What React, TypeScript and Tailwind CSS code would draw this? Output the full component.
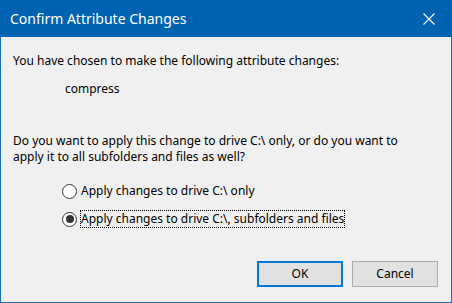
import React from 'react';

const RadioRow: React.FC<{ label: string; checked?: boolean; focused?: boolean }> = ({
  label,
  checked,
  focused,
}) => (
  <div className="flex h-[18px] items-center">
    <span className="flex h-[15px] w-[15px] shrink-0 items-center justify-center rounded-full border border-[#333333] bg-white">
      {checked && <span className="h-[8px] w-[8px] rounded-full bg-[#333333]" />}
    </span>
    <span
      className={`ml-[3px] flex h-[18px] items-center px-px ${
        focused ? 'outline outline-1 outline-dotted outline-[#000000] -outline-offset-1' : ''
      }`}
    >
      {label}
    </span>
  </div>
);

export default function App() {
  return (
    <div className="flex h-[303px] w-[452px] flex-col bg-[#f0f0f0] font-['Segoe_UI','Noto_Sans',sans-serif] text-[12px] text-black">
      {/* Title bar */}
      <div className="flex h-[37px] shrink-0 items-center justify-between bg-[#0063b1] pl-[10px] text-white">
        <span className="text-[14px] leading-[20px]">Confirm Attribute Changes</span>
        <div className="flex h-[37px] w-[46px] items-center justify-center">
          <svg width="12" height="12" viewBox="0 0 12 12" fill="none" stroke="white" strokeWidth="1.1">
            <path d="M0.5 0.5 L11.5 11.5 M11.5 0.5 L0.5 11.5" />
          </svg>
        </div>
      </div>

      {/* Body */}
      <div className="flex flex-1 flex-col border-x border-b border-[#1a6fc0] pl-[12px] pt-[16px] leading-[16px]">
        <p>You have chosen to make the following attribute changes:</p>
        <p className="ml-[52px] mt-[12px]">compress</p>
        <p className="mt-[36px] w-[400px]">
          Do you want to apply this change to drive C:\ only, or do you want to apply it to all subfolders and
          files as well?
        </p>

        <div className="ml-[49px] mt-[17px] flex flex-col gap-[10px]">
          <RadioRow label="Apply changes to drive C:\ only" />
          <RadioRow label="Apply changes to drive C:\, subfolders and files" checked focused />
        </div>

        <div className="mt-auto flex justify-end gap-[9px] pb-[15px] pr-[13px]">
          <button
            type="button"
            className="h-[26px] w-[86px] border-2 border-[#0078d7] bg-[#e1e1e1] leading-[16px]"
          >
            OK
          </button>
          <button
            type="button"
            className="h-[26px] w-[86px] border border-[#adadad] bg-[#e1e1e1] leading-[16px]"
          >
            Cancel
          </button>
        </div>
      </div>
    </div>
  );
}
